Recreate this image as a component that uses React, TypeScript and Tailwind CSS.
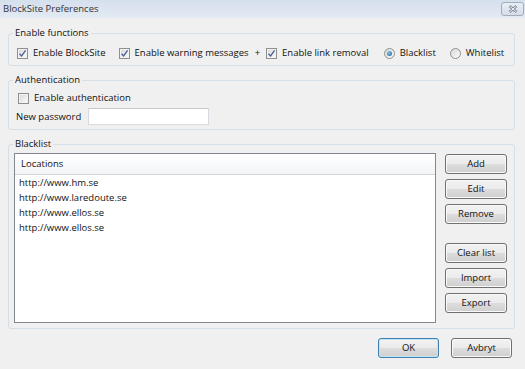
import React from "react";

const locations = [
  "http://www.hm.se",
  "http://www.laredoute.se",
  "http://www.ellos.se",
  "http://www.ellos.se",
];

const Checkbox = ({ checked }: { checked?: boolean }) => (
  <span className="flex h-[11px] w-[11px] shrink-0 items-center justify-center border border-[#8e8f8f] bg-[linear-gradient(135deg,#d8d8d8,#fbfbfb)] shadow-[inset_0_0_0_1px_#f2f2f2]">
    {checked && (
      <svg width="9" height="9" viewBox="0 0 9 9">
        <path
          d="M1.5 4.8 L3.6 7 L7.6 1.4"
          fill="none"
          stroke="#4a5f9b"
          strokeWidth="1.3"
        />
      </svg>
    )}
  </span>
);

const Radio = ({ checked }: { checked?: boolean }) => (
  <span className="flex h-[11px] w-[11px] shrink-0 items-center justify-center rounded-full border border-[#8e8f8f] bg-[linear-gradient(135deg,#d8d8d8,#fbfbfb)]">
    {checked && (
      <span className="h-[5px] w-[5px] rounded-full bg-[radial-gradient(circle_at_40%_35%,#7cc3ee,#1d5f92)]" />
    )}
  </span>
);

const Button = ({
  label,
  primary,
  className = "",
}: {
  label: string;
  primary?: boolean;
  className?: string;
}) => (
  <button
    className={`flex h-[20px] items-center justify-center rounded-[3px] border bg-[linear-gradient(to_bottom,#f2f2f2_0%,#ebebeb_50%,#dddddd_50%,#cfcfcf_100%)] text-[#111] ${
      primary
        ? "border-[#3c7fb1] shadow-[inset_0_0_0_1px_#c4e5f6]"
        : "border-[#707070] shadow-[inset_0_0_0_1px_#fafafa]"
    } ${className}`}
  >
    {label}
  </button>
);

const GroupBox = ({
  title,
  children,
  className = "",
}: {
  title: string;
  children: React.ReactNode;
  className?: string;
}) => (
  <fieldset
    className={`w-[507px] rounded-[3px] border border-[#d5dfe5] ${className}`}
  >
    <legend className="ml-[4px] px-[2px] leading-[12px]">{title}</legend>
    {children}
  </fieldset>
);

const App = () => {
  return (
    <div className="flex h-[369px] w-[525px] flex-col bg-[#f0f0f0] font-['Open_Sans',sans-serif] text-[9.5px] text-[#111]">
      {/* title bar */}
      <div className="flex h-[18px] shrink-0 items-start justify-between bg-[linear-gradient(to_bottom,#d5e0ed,#e3eaf3)]">
        <span className="mt-[3px] pl-[3px] leading-[12px] text-[#333]">
          BlockSite Preferences
        </span>
        <span className="mr-[1px] mt-[2px] flex h-[14px] w-[23px] items-center justify-center rounded-[3px] border border-[#a3aebd] bg-[linear-gradient(to_bottom,#e9eef4,#d6dee8)]">
          <svg width="10" height="8" viewBox="0 0 10 8">
            <path d="M1.5 1 L8.5 7 M8.5 1 L1.5 7" stroke="#7d8896" strokeWidth="2.6" />
            <path d="M1.5 1 L8.5 7 M8.5 1 L1.5 7" stroke="#f4f6f9" strokeWidth="1" />
          </svg>
        </span>
      </div>

      <div className="flex flex-col pl-[8px] pr-[10px]">
        <GroupBox title="Enable functions" className="mt-[9px]">
          <div className="flex items-center pb-[6px] pl-[8px] pt-[8px] leading-[12px]">
            <label className="flex items-center gap-[5px]">
              <Checkbox checked />
              Enable BlockSite
            </label>
            <label className="ml-[13px] flex items-center gap-[5px]">
              <Checkbox checked />
              Enable warning messages
            </label>
            <span className="ml-[6px]">+</span>
            <label className="ml-[6px] flex items-center gap-[5px]">
              <Checkbox checked />
              Enable link removal
            </label>
            <label className="ml-[15px] flex items-center gap-[5px]">
              <Radio checked />
              Blacklist
            </label>
            <label className="ml-[14px] flex items-center gap-[5px]">
              <Radio />
              Whitelist
            </label>
          </div>
        </GroupBox>

        <GroupBox title="Authentication" className="mt-[8px]">
          <div className="flex flex-col pb-[4px] pl-[7px] pt-[6px] leading-[12px]">
            <label className="ml-[2px] flex items-center gap-[5px]">
              <Checkbox />
              Enable authentication
            </label>
            <div className="mt-[4px] flex items-center">
              <span className="w-[72px]">New password</span>
              <input className="h-[17px] w-[121px] border border-[#d6dbe2] border-t-[#c3c8cf] bg-white outline-none" />
            </div>
          </div>
        </GroupBox>

        <GroupBox title="Blacklist" className="mt-[8px]">
          <div className="flex pb-[5px] pl-[5px] pr-[7px] pt-[3px]">
            <div className="flex h-[170px] w-[422px] flex-col border border-[#828790] bg-white">
              <div className="flex h-[21px] shrink-0 items-center border-b border-[#d5d5d5] bg-[linear-gradient(to_bottom,#ffffff,#f3f4f6)] pl-[6px]">
                Locations
              </div>
              <div className="flex flex-col pt-[1px]">
                {locations.map((loc, i) => (
                  <div key={i} className="flex h-[15px] items-center pl-[4px]">
                    {loc}
                  </div>
                ))}
              </div>
            </div>
            <div className="ml-[9px] mt-[1px] flex flex-col gap-[5px]">
              <Button label="Add" className="w-[62px]" />
              <Button label="Edit" className="w-[62px]" />
              <Button label="Remove" className="w-[62px]" />
              <Button label="Clear list" className="mt-[14px] w-[62px]" />
              <Button label="Import" className="w-[62px]" />
              <Button label="Export" className="w-[62px]" />
            </div>
          </div>
        </GroupBox>

        <div className="mt-[9px] flex justify-end gap-[12px] pr-[3px]">
          <Button label="OK" primary className="w-[61px]" />
          <Button label="Avbryt" className="w-[61px]" />
        </div>
      </div>
    </div>
  );
};

export default App;
